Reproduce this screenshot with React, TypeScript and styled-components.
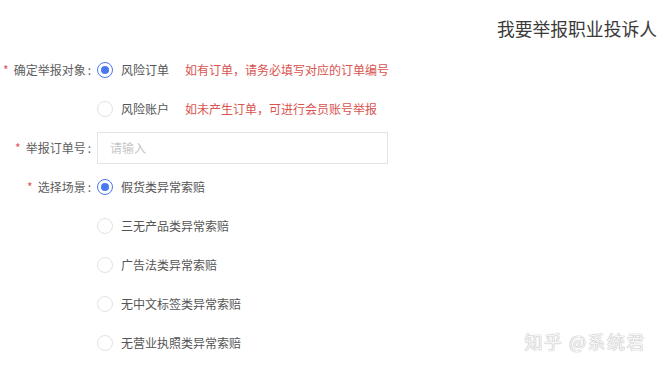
import styled, { createGlobalStyle } from "styled-components";

const GlobalStyle = createGlobalStyle`
  body {
    margin: 0;
    background: #fff;
    font-family: "Noto Sans CJK SC", "Noto Sans", sans-serif;
  }
`;

const SPage = styled.div`
  position: relative;
  width: 665px;
  height: 371px;
  overflow: hidden;
  background: #fff;
`;

const SHeader = styled.div`
  display: flex;
  justify-content: flex-end;
  height: 50px;
  padding: 18px 8px 0 0;
  box-sizing: border-box;
`;

const STitle = styled.h1`
  margin: 0;
  font-size: 17.8px;
  line-height: 20px;
  font-weight: 400;
  color: #3a3a3a;
`;

const SForm = styled.div`
  display: flex;
  flex-direction: column;
`;

const SItem = styled.div`
  display: grid;
  grid-template-columns: 91px auto;
  column-gap: 6px;
  align-items: start;
`;

const SLabel = styled.label`
  display: flex;
  justify-content: flex-end;
  align-items: center;
  height: 39px;
  font-size: 12px;
  color: #606060;
  white-space: nowrap;
`;

const SStar = styled.span`
  color: #e0565b;
  margin-right: 5px;
  font-size: 12px;
`;

const SColon = styled.span`
  margin-left: 2px;
`;

const SOptions = styled.div`
  display: flex;
  flex-direction: column;
`;

const SOption = styled.div`
  display: flex;
  align-items: center;
  height: 39px;
  font-size: 12px;
  color: #555;
`;

const SRadio = styled.span<{ $checked?: boolean }>`
  position: relative;
  width: 16px;
  height: 16px;
  box-sizing: border-box;
  border-radius: 50%;
  border: 1px solid ${(p) => (p.$checked ? "#4a78f0" : "#e2e2e2")};
  margin-right: 8px;
  flex-shrink: 0;
  &::after {
    content: "";
    display: ${(p) => (p.$checked ? "block" : "none")};
    position: absolute;
    left: 3px;
    top: 3px;
    width: 8px;
    height: 8px;
    border-radius: 50%;
    background: #4a78f0;
  }
`;

const SHint = styled.span`
  margin-left: 16px;
  color: #d9534f;
`;

const SFieldRow = styled.div`
  display: flex;
  align-items: center;
  height: 39px;
`;

const SInput = styled.input`
  width: 291px;
  height: 32px;
  box-sizing: border-box;
  border: 1px solid #e4e4e4;
  padding: 0 12px;
  font-family: inherit;
  font-size: 12px;
  color: #333;
  outline: none;
  &::placeholder {
    color: #c6c6c6;
  }
`;

const SWatermark = styled.div`
  position: absolute;
  right: 19px;
  bottom: 17px;
  font-size: 18px;
  color: #f7f7f7;
  text-shadow: 0 0 1px #b0b0b0, 0 0 1px #b0b0b0;
  letter-spacing: 1.5px;
`;

type Opt = { text: string; checked?: boolean; hint?: string };

const RadioGroup = ({ options }: { options: Opt[] }) => (
  <SOptions>
    {options.map((o) => (
      <SOption key={o.text}>
        <SRadio $checked={o.checked} />
        {o.text}
        {o.hint && <SHint>{o.hint}</SHint>}
      </SOption>
    ))}
  </SOptions>
);

const Label = ({ text }: { text: string }) => (
  <SLabel>
    <SStar>*</SStar>
    {text}
    <SColon>:</SColon>
  </SLabel>
);

const App = () => {
  return (
    <SPage>
      <GlobalStyle />
      <SHeader>
        <STitle>我要举报职业投诉人</STitle>
      </SHeader>
      <SForm>
        <SItem>
          <Label text="确定举报对象" />
          <RadioGroup
            options={[
              { text: "风险订单", checked: true, hint: "如有订单，请务必填写对应的订单编号" },
              { text: "风险账户", hint: "如未产生订单，可进行会员账号举报" },
            ]}
          />
        </SItem>
        <SItem>
          <Label text="举报订单号" />
          <SFieldRow>
            <SInput placeholder="请输入" />
          </SFieldRow>
        </SItem>
        <SItem>
          <Label text="选择场景" />
          <RadioGroup
            options={[
              { text: "假货类异常索赔", checked: true },
              { text: "三无产品类异常索赔" },
              { text: "广告法类异常索赔" },
              { text: "无中文标签类异常索赔" },
              { text: "无营业执照类异常索赔" },
            ]}
          />
        </SItem>
      </SForm>
      <SWatermark>知乎 @系统君</SWatermark>
    </SPage>
  );
};

export default App;
